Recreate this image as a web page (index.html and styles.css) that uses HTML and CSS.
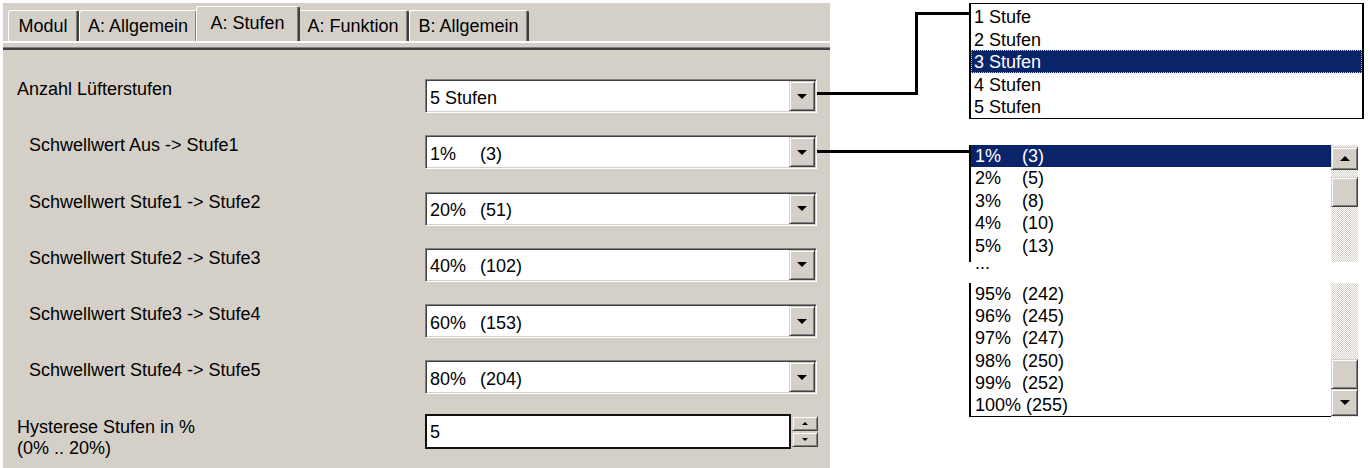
FILE: index.html
```html
<!DOCTYPE html>
<html lang="de">
<head>
    <meta charset="UTF-8">
    <title>Lüfterstufen</title>
    <link rel="stylesheet" href="styles.css">
</head>
<body>
    <div class="seite">
        <!-- Parameterdialog -->
        <div class="panel">
            <div class="tabs">
                <div class="tab t-modul">Modul</div>
                <div class="tab t-allg">A: Allgemein</div>
                <div class="tab t-stufen aktiv">A: Stufen</div>
                <div class="tab t-funk">A: Funktion</div>
                <div class="tab t-ballg">B: Allgemein</div>
            </div>
            <div class="tabline"></div>

            <div class="formular">
                <div class="zeile">
                    <div class="label">Anzahl Lüfterstufen</div>
                    <div class="auswahl">
                        <div class="wert">5 Stufen</div>
                        <div class="knopf"><span class="pfeil-runter"></span></div>
                    </div>
                </div>
                <div class="zeile">
                    <div class="label einzug">Schwellwert Aus -&gt; Stufe1</div>
                    <div class="auswahl">
                        <div class="wert"><span class="proz">1%</span>(3)</div>
                        <div class="knopf"><span class="pfeil-runter"></span></div>
                    </div>
                </div>
                <div class="zeile">
                    <div class="label einzug">Schwellwert Stufe1 -&gt; Stufe2</div>
                    <div class="auswahl">
                        <div class="wert"><span class="proz">20%</span>(51)</div>
                        <div class="knopf"><span class="pfeil-runter"></span></div>
                    </div>
                </div>
                <div class="zeile">
                    <div class="label einzug">Schwellwert Stufe2 -&gt; Stufe3</div>
                    <div class="auswahl">
                        <div class="wert"><span class="proz">40%</span>(102)</div>
                        <div class="knopf"><span class="pfeil-runter"></span></div>
                    </div>
                </div>
                <div class="zeile">
                    <div class="label einzug">Schwellwert Stufe3 -&gt; Stufe4</div>
                    <div class="auswahl">
                        <div class="wert"><span class="proz">60%</span>(153)</div>
                        <div class="knopf"><span class="pfeil-runter"></span></div>
                    </div>
                </div>
                <div class="zeile">
                    <div class="label einzug">Schwellwert Stufe4 -&gt; Stufe5</div>
                    <div class="auswahl">
                        <div class="wert"><span class="proz">80%</span>(204)</div>
                        <div class="knopf"><span class="pfeil-runter"></span></div>
                    </div>
                </div>
                <div class="zeile spin">
                    <div class="label zweizeilig">Hysterese Stufen in %<br>(0% .. 20%)</div>
                    <div class="spinfeld">
                        <div class="eingabe">5</div>
                        <div class="spinknoepfe">
                            <div class="spinknopf"><span class="pfeil-klein-hoch"></span></div>
                            <div class="spinknopf"><span class="pfeil-klein-runter"></span></div>
                        </div>
                    </div>
                </div>
            </div>
        </div>

        <!-- aufgeklappte Listen -->
        <div class="rechts">
            <div class="liste1">
                <div class="eintrag">1 Stufe</div>
                <div class="eintrag">2 Stufen</div>
                <div class="eintrag markiert">3 Stufen</div>
                <div class="eintrag">4 Stufen</div>
                <div class="eintrag">5 Stufen</div>
            </div>

            <div class="liste2">
                <div class="teil teil1">
                    <div class="eintraege">
                        <div class="eintrag2 markiert2"><span class="proz2">1%</span>(3)</div>
                        <div class="eintrag2"><span class="proz2">2%</span>(5)</div>
                        <div class="eintrag2"><span class="proz2">3%</span>(8)</div>
                        <div class="eintrag2"><span class="proz2">4%</span>(10)</div>
                        <div class="eintrag2"><span class="proz2">5%</span>(13)</div>
                    </div>
                    <div class="rollbalken">
                        <div class="rollknopf oben"><span class="pfeil-hoch"></span></div>
                        <div class="spur kurz"></div>
                        <div class="schieber"></div>
                        <div class="spur"></div>
                    </div>
                </div>
                <div class="punkte">...</div>
                <div class="teil teil2">
                    <div class="eintraege">
                        <div class="eintrag2"><span class="proz2">95%</span>(242)</div>
                        <div class="eintrag2"><span class="proz2">96%</span>(245)</div>
                        <div class="eintrag2"><span class="proz2">97%</span>(247)</div>
                        <div class="eintrag2"><span class="proz2">98%</span>(250)</div>
                        <div class="eintrag2"><span class="proz2">99%</span>(252)</div>
                        <div class="eintrag2"><span class="proz2 breit">100%</span>(255)</div>
                    </div>
                    <div class="rollbalken">
                        <div class="spur"></div>
                        <div class="schieber"></div>
                        <div class="rollknopf unten"><span class="pfeil-runter"></span></div>
                    </div>
                </div>
            </div>
        </div>
    </div>

    <!-- Verbindungslinien -->
    <svg class="linien" width="1370" height="468" viewBox="0 0 1370 468">
        <path d="M817 93.5 H916.5 V13.5 H969" />
        <path d="M817 151.5 H969" />
    </svg>
</body>
</html>
```

FILE: styles.css
```css
/* Grundlayout */
body {
    margin: 0;
    background-color: #fff;
    font-family: "Liberation Sans", Arial, sans-serif;
    font-size: 18px;
    color: #000;
    overflow: hidden;
}

.seite {
    display: flex;
    align-items: flex-start;
}

/* Dialogfläche */
.panel {
    width: 827px;
    height: 465px;
    margin: 3px 0 0 3px;
    background-color: #d4d0c8;
}

/* Registerkarten */
.tabs {
    display: flex;
    align-items: flex-end;
    height: 38px;
    padding-left: 5px;
}

.tab {
    height: 31px;
    box-sizing: border-box;
    display: flex;
    align-items: center;
    justify-content: center;
    border-top: 1px solid #fff;
    border-left: 1px solid #fff;
    border-right: 2px solid #404040;
    border-radius: 3px 3px 0 0;
    box-shadow: inset -1px 0 #808080;
    background-color: #d4d0c8;
}

.t-modul { width: 71px; }
.t-allg { width: 119px; }
.t-funk { width: 111px; }
.t-ballg { width: 120px; }

.tab.aktiv {
    width: 104px;
    height: 35px;
    margin: 0 -2px;
    position: relative;
    z-index: 1;
    padding-bottom: 2px;
}

.tabline {
    height: 9px;
    background: linear-gradient(to bottom, #fff 0 2px, #d4d0c8 2px 6px, #808080 6px 7px, #404040 7px 9px);
}

/* Formularzeilen */
.formular {
    padding-top: 29px;
}

.zeile {
    display: flex;
    height: 56.25px;
}

.zeile.spin {
    height: auto;
}

.label {
    width: 422px;
    box-sizing: border-box;
    padding-left: 14px;
    line-height: 20px;
}

.label.einzug {
    padding-left: 26px;
}

.label.zweizeilig {
    line-height: 21px;
}

/* Auswahlfelder */
.auswahl {
    width: 392px;
    height: 34px;
    box-sizing: border-box;
    display: flex;
    align-items: center;
    padding: 1px;
    background-color: #fff;
    border: 1px solid;
    border-color: #808080 #fff #fff #808080;
    box-shadow: inset 1px 1px #404040, inset -1px -1px #d4d0c8;
}

.wert {
    flex: 1;
    padding: 3px 0 0 3px;
    line-height: 20px;
    white-space: nowrap;
}

.proz {
    display: inline-block;
    width: 50px;
}

.knopf {
    width: 26px;
    height: 30px;
    box-sizing: border-box;
    display: flex;
    align-items: center;
    justify-content: center;
    background-color: #d4d0c8;
    border: 1px solid;
    border-color: #d4d0c8 #404040 #404040 #d4d0c8;
    box-shadow: inset 1px 1px #fff, inset -1px -1px #808080;
}

.pfeil-runter {
    width: 0;
    height: 0;
    border-left: 5px solid transparent;
    border-right: 5px solid transparent;
    border-top: 5px solid #000;
}

.pfeil-hoch {
    width: 0;
    height: 0;
    border-left: 5px solid transparent;
    border-right: 5px solid transparent;
    border-bottom: 5px solid #000;
}

/* Drehfeld */
.spinfeld {
    display: flex;
    margin-top: -2.5px;
}

.eingabe {
    width: 366px;
    height: 35px;
    box-sizing: border-box;
    border: 2px solid #111;
    background-color: #fff;
    padding: 5px 0 0 3px;
    line-height: 22px;
}

.spinknoepfe {
    display: flex;
    flex-direction: column;
    gap: 1px;
    margin: 2px 0 0 1px;
}

.spinknopf {
    width: 26px;
    height: 15px;
    box-sizing: border-box;
    display: flex;
    align-items: center;
    justify-content: center;
    background-color: #d4d0c8;
    border: 1px solid;
    border-color: #d4d0c8 #404040 #404040 #d4d0c8;
    box-shadow: inset 1px 1px #fff, inset -1px -1px #808080;
}

.pfeil-klein-hoch {
    width: 0;
    height: 0;
    border-left: 3px solid transparent;
    border-right: 3px solid transparent;
    border-bottom: 3px solid #000;
}

.pfeil-klein-runter {
    width: 0;
    height: 0;
    border-left: 3px solid transparent;
    border-right: 3px solid transparent;
    border-top: 3px solid #000;
}

/* Listen rechts */
.rechts {
    margin-left: 139px;
}

.liste1 {
    width: 395px;
    margin-top: 3px;
    box-sizing: border-box;
    border-style: solid;
    border-color: #000;
    border-width: 1px 2px;
    background-color: #fff;
    padding-top: 1px;
}

.eintrag {
    height: 22.6px;
    line-height: 24px;
    padding-left: 3px;
    white-space: nowrap;
}

.markiert {
    background-color: #0a246a;
    color: #fff;
    outline: 1px dotted #d8c070;
    outline-offset: -1px;
}

.liste2 {
    width: 389px;
    margin-top: 26px;
}

.teil {
    display: flex;
    background-color: #fff;
}

.teil1 {
    height: 117px;
}

.teil2 {
    height: 134.5px;
}

.eintraege {
    flex: 1;
    border-left: 2px solid #000;
    overflow: hidden;
}

.teil2 .eintraege {
    border-bottom: 1px solid #000;
}

.eintrag2 {
    height: 22.4px;
    line-height: 22.4px;
    padding-left: 4px;
    white-space: nowrap;
}

.teil2 .eintrag2 {
    height: 22.2px;
    line-height: 22.2px;
}

.markiert2 {
    background-color: #0a246a;
    color: #fff;
}

.proz2 {
    display: inline-block;
    width: 47px;
}

.proz2.breit {
    width: auto;
    margin-right: 5px;
}

.punkte {
    height: 21px;
    line-height: 2px;
    padding-left: 6px;
}

/* Bildlaufleiste */
.rollbalken {
    width: 27px;
    display: flex;
    flex-direction: column;
    background: repeating-conic-gradient(#d4d0c8 0 25%, #fff 0 50%) 0 0 / 2px 2px;
}

.teil1 .rollbalken {
    padding-top: 2px;
}

.spur {
    flex: 1;
}

.spur.kurz {
    flex: none;
    height: 7px;
}

.rollknopf,
.schieber {
    box-sizing: border-box;
    background-color: #d4d0c8;
    border: 1px solid;
    border-color: #d4d0c8 #404040 #404040 #d4d0c8;
    box-shadow: inset 1px 1px #fff, inset -1px -1px #808080;
}

.rollknopf {
    height: 23px;
    display: flex;
    align-items: center;
    justify-content: center;
}

.rollknopf.unten {
    height: 27px;
    margin-bottom: 1px;
}

.schieber {
    height: 30px;
}

/* Verbindungslinien */
.linien {
    position: absolute;
    top: 0;
    left: 0;
    pointer-events: none;
}

.linien path {
    fill: none;
    stroke: #000;
    stroke-width: 3;
}
```
